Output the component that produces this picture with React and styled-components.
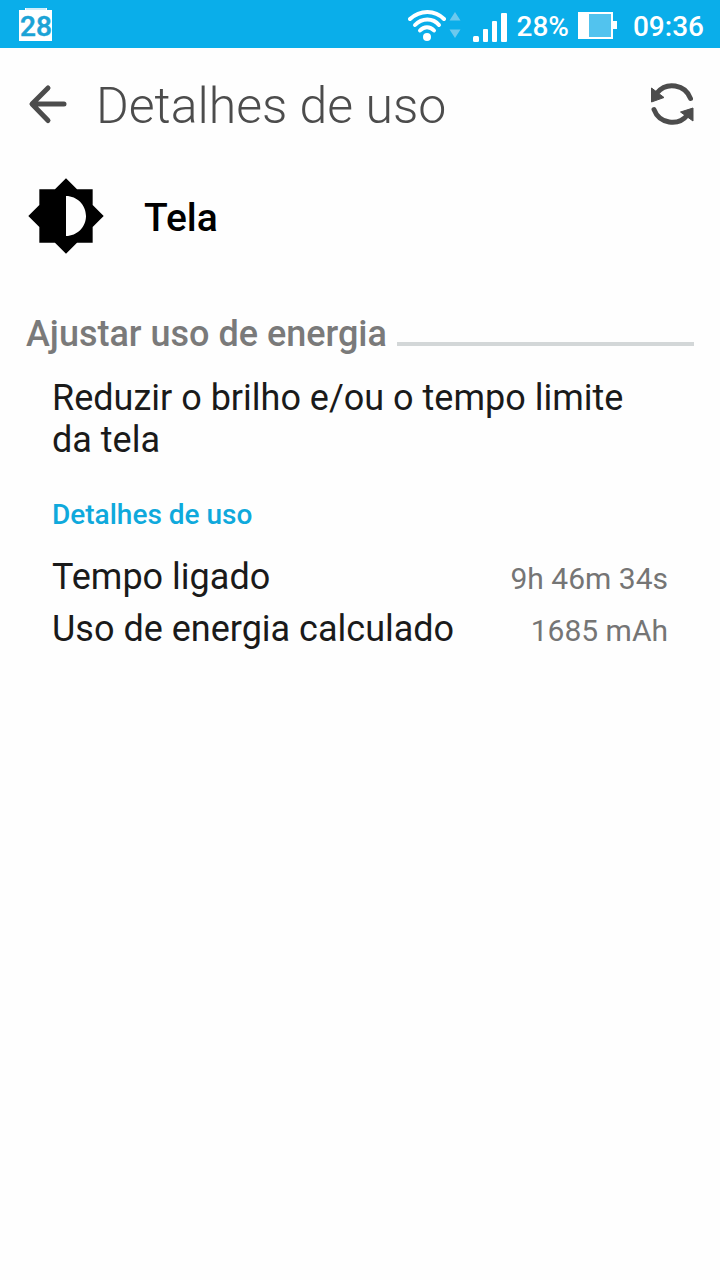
import React from 'react';
import styled, { createGlobalStyle } from 'styled-components';

const details = [
  { label: 'Tempo ligado', value: '9h 46m 34s' },
  { label: 'Uso de energia calculado', value: '1685 mAh' },
];

const App = () => {
  return (
    <>
      <GlobalStyle />
      <StatusBar>
        <CalendarIcon />
        <StatusGroup>
          <WifiIcon />
          <SignalIcon />
          <StatusText>28%</StatusText>
          <BatteryIcon />
          <Clock>09:36</Clock>
        </StatusGroup>
      </StatusBar>
      <Header>
        <IconButton type="button" aria-label="Voltar">
          <BackIcon />
        </IconButton>
        <Title>Detalhes de uso</Title>
        <IconButton type="button" aria-label="Atualizar">
          <RefreshIcon />
        </IconButton>
      </Header>
      <main>
        <AppRow>
          <BrightnessIcon />
          <AppName>Tela</AppName>
        </AppRow>
        <SectionHeader>
          <SectionTitle>Ajustar uso de energia</SectionTitle>
          <Rule />
        </SectionHeader>
        <Content>
          <Hint>Reduzir o brilho e/ou o tempo limite da tela</Hint>
          <SubTitle>Detalhes de uso</SubTitle>
          <DetailList>
            {details.map((item) => (
              <DetailRow key={item.label}>
                <dt>{item.label}</dt>
                <DetailValue>{item.value}</DetailValue>
              </DetailRow>
            ))}
          </DetailList>
        </Content>
      </main>
    </>
  );
};

const CalendarIcon = () => (
  <svg width="34" height="34" viewBox="0 0 34 34" role="img" aria-label="28">
    <path d="M6 0h22v2h5v31H0V2h6z" fill="#fff" />
    <path d="M7 1h20" stroke="#9fdcf5" strokeWidth="1" />
    <text x="17" y="28" textAnchor="middle" fontFamily="Roboto, sans-serif" fontSize="28" fontWeight="500" fill="#1ba3d6" stroke="#1ba3d6" strokeWidth="0.5">
      28
    </text>
  </svg>
);

const WifiIcon = () => (
  <svg width="55" height="34" viewBox="0 0 55 34" fill="none" aria-hidden="true">
    <g stroke="#fff" strokeWidth="4" strokeLinecap="round">
      <path d="M2 11C12 1.500 27 1.500 36 11" />
      <path d="M7 17C14 9.500 25 9.500 31 17" />
      <path d="M12 22.500C16 18 22 18 26 22.500" />
    </g>
    <circle cx="19" cy="29" r="4" fill="#fff" />
    <path d="M47 4l5.500 8.500h-11zM47 30l5.500-8.500h-11z" fill="#6cc9ee" />
  </svg>
);

const SignalIcon = () => (
  <svg width="36" height="34" viewBox="0 0 36 34" fill="#fff" aria-hidden="true">
    <rect x="1" y="28" width="6" height="6" rx="1.500" />
    <rect x="11" y="21" width="5" height="13" rx="1" />
    <rect x="20" y="13" width="5" height="21" rx="1" />
    <rect x="29" y="5" width="6" height="29" rx="1" />
  </svg>
);

const BatteryIcon = () => (
  <svg width="39" height="28" viewBox="0 0 39 28" aria-hidden="true">
    <path d="M0 1h35v9h4v8h-4v10H0z" fill="#fff" />
    <path d="M11 3h22v23H11z" fill="#52c3ee" />
  </svg>
);

const BackIcon = () => (
  <svg width="40" height="48" viewBox="0 0 40 48" fill="none" stroke="#4c4c4c" strokeWidth="5" strokeLinecap="round" strokeLinejoin="round" aria-hidden="true">
    <path d="M20 8L4 24l16 16.500M5 24h31" />
  </svg>
);

const RefreshIcon = () => (
  <svg width="48" height="48" viewBox="0 0 48 48" aria-hidden="true">
    <g fill="none" stroke="#4c4c4c" strokeWidth="5" strokeLinecap="round">
      <path d="M9 13A19.500 19.500 0 0 1 42.500 18.500" />
      <path d="M39.500 35A19.500 19.500 0 0 1 6 29.500" />
    </g>
    <path d="M3.500 8L16 17.500 3.500 22zM45 28L32.500 32 45 41z" fill="#4c4c4c" stroke="#4c4c4c" strokeLinejoin="round" />
  </svg>
);

const BrightnessIcon = () => (
  <svg width="80" height="80" viewBox="0 0 24 24" aria-hidden="true">
    <path d="M20 15.310L23.310 12 20 8.690V4h-4.690L12 .69 8.690 4H4v4.690L.69 12 4 15.310V20h4.690L12 23.310 15.310 20H20v-4.690zM12 18V6c3.310 0 6 2.690 6 6s-2.690 6-6 6z" />
  </svg>
);

const GlobalStyle = createGlobalStyle`
  * {
    box-sizing: border-box;
  }

  body {
    background: #fefefe;
    color: #1a1a1a;
    font-family: Roboto, sans-serif;
    margin: 0;
  }
`;

const StatusBar = styled.div`
  align-items: center;
  background: #0aaeea;
  color: #fff;
  display: flex;
  font-size: 28px;
  font-weight: 500;
  height: 48px;
  justify-content: space-between;
  line-height: 32px;
  padding: 2px 16px 0 19px;
`;

const StatusGroup = styled.div`
  align-items: center;
  display: flex;
  gap: 9px;
`;

const StatusText = styled.span`
  padding-top: 4px;
`;

const Clock = styled.time`
  margin-left: 7px;
  padding-top: 4px;
`;

const Header = styled.header`
  align-items: center;
  display: flex;
  height: 112px;
  padding: 0 24px 0 28px;
`;

const IconButton = styled.button`
  background: none;
  border: 0;
  cursor: pointer;
  display: flex;
  padding: 0;
`;

const Title = styled.h1`
  color: #4c4c4c;
  flex: 1;
  font-size: 50px;
  font-weight: 300;
  line-height: 60px;
  margin: 0;
  padding: 4px 0 0 28px;
`;

const AppRow = styled.div`
  align-items: center;
  display: flex;
  gap: 38px;
  padding: 16px 26px;
`;

const AppName = styled.h2`
  color: #000;
  font-size: 39px;
  font-weight: 500;
  line-height: 48px;
  margin: 0;
  padding-top: 4px;
`;

const SectionHeader = styled.div`
  align-items: flex-end;
  display: flex;
  gap: 10px;
  padding: 42px 26px 0;
`;

const SectionTitle = styled.h3`
  color: #7a7a7a;
  font-size: 36px;
  font-weight: 500;
  line-height: 40px;
  margin: 0;
`;

const Rule = styled.hr`
  background: #d3d7d8;
  border: 0;
  flex: 1;
  height: 4px;
  margin: 0 0 8px;
`;

const Content = styled.section`
  font-size: 36px;
  line-height: 42px;
  padding: 23px 52px;
`;

const Hint = styled.p`
  margin: 0;
`;

const SubTitle = styled.h4`
  color: #0fa9dc;
  font-size: 28px;
  font-weight: 500;
  line-height: 32px;
  margin: 38px 0 0;
`;

const DetailList = styled.dl`
  display: grid;
  gap: 8px;
  margin: 25px 0 0;
`;

const DetailRow = styled.div`
  align-items: baseline;
  display: flex;
  justify-content: space-between;
`;

const DetailValue = styled.dd`
  color: #757575;
  font-size: 30px;
  margin: 0;
`;

export default App;
